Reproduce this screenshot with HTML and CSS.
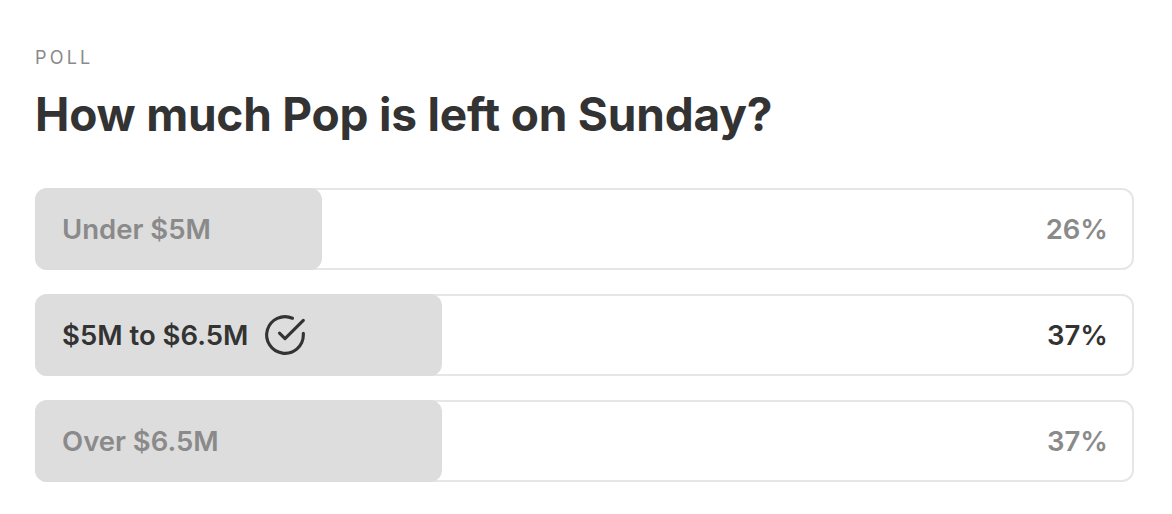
FILE: index.html
```html
<!DOCTYPE html>
<html lang="en">
<head>
    <meta charset="UTF-8">
    <title>Poll</title>
    <meta name="viewport" content="width=device-width, initial-scale=1.0">
    <link rel="stylesheet" href="styles.css">
</head>
<body>
    <div class="poll">
        <div class="poll-label">POLL</div>
        <h1 class="poll-title">How much Pop is left on Sunday?</h1>

        <div class="options">
            <div class="option">
                <div class="option-fill" style="width: 26%;"></div>
                <span class="option-text">Under $5M</span>
                <span class="option-pct">26%</span>
            </div>
            <div class="option selected">
                <div class="option-fill" style="width: 37%;"></div>
                <span class="option-text">
                    $5M to $6.5M
                    <svg class="check" viewBox="0 0 24 24" fill="none" stroke="currentColor" stroke-width="1.7" stroke-linecap="round" stroke-linejoin="round">
                        <path d="M22 11.08V12a10 10 0 1 1-5.93-9.14"></path>
                        <polyline points="22 4 12 14.01 9 11.01"></polyline>
                    </svg>
                </span>
                <span class="option-pct">37%</span>
            </div>
            <div class="option">
                <div class="option-fill" style="width: 37%;"></div>
                <span class="option-text">Over $6.5M</span>
                <span class="option-pct">37%</span>
            </div>
        </div>
    </div>
</body>
</html>
```

FILE: styles.css
```css
body {
    margin: 0;
    font-family: Inter, "Noto Sans", Arial, sans-serif;
    background-color: #fff;
    color: #333;
}
.poll {
    padding: 47px 38px 0 35px;
}
.poll-label {
    font-size: 18px;
    line-height: 22px;
    letter-spacing: 3.2px;
    color: #8a8a8a;
}
.poll-title {
    margin: 18px 0 47px;
    font-size: 46px;
    line-height: 54px;
    font-weight: 700;
    letter-spacing: -0.2px;
    color: #333;
}
.options {
    display: flex;
    flex-direction: column;
    gap: 24px;
}
.option {
    position: relative;
    display: flex;
    align-items: center;
    justify-content: space-between;
    height: 78px;
    padding: 0 24px 0 25px;
    border: 2px solid #e6e6e6;
    border-radius: 12px;
    font-size: 27.5px;
    font-weight: 580;
    color: #8a8a8a;
}
.option-fill {
    position: absolute;
    top: -2px;
    bottom: -2px;
    left: -2px;
    padding-right: 2px;
    background-color: #dddddd;
    border-radius: 12px;
}
.option-text,
.option-pct {
    position: relative;
    display: flex;
    align-items: center;
}
.selected {
    color: #333;
}
.check {
    width: 44px;
    height: 44px;
    margin-left: 15px;
}
```
